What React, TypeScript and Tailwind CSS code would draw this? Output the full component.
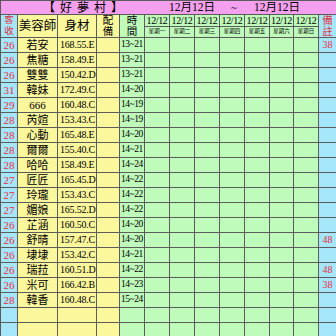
const ROWS = [
  { n: '26', name: '若安', body: '168.55.E', time: '13~21', note: '38' },
  { n: '26', name: '焦糖', body: '158.49.E', time: '13~21', note: '' },
  { n: '26', name: '雙雙', body: '150.42.D', time: '13~21', note: '' },
  { n: '31', name: '韓妹', body: '172.49.C', time: '14~20', note: '' },
  { n: '29', name: '666', body: '160.48.C', time: '14~19', note: '' },
  { n: '28', name: '芮媗', body: '153.43.C', time: '14~19', note: '' },
  { n: '28', name: '心動', body: '165.48.E', time: '14~20', note: '' },
  { n: '28', name: '爾爾', body: '155.40.C', time: '14~21', note: '' },
  { n: '28', name: '哈哈', body: '158.49.E', time: '14~24', note: '' },
  { n: '27', name: '匠匠', body: '165.45.D', time: '14~22', note: '' },
  { n: '27', name: '玲瓏', body: '153.43.C', time: '14~22', note: '' },
  { n: '27', name: '媚娘', body: '165.52.D', time: '14~22', note: '' },
  { n: '26', name: '芷涵', body: '160.50.C', time: '14~20', note: '' },
  { n: '26', name: '舒晴', body: '157.47.C', time: '14~20', note: '48' },
  { n: '26', name: '埭埭', body: '153.42.C', time: '14~21', note: '' },
  { n: '26', name: '瑞菈', body: '160.51.D', time: '14~22', note: '48' },
  { n: '26', name: '米可', body: '166.42.B', time: '14~23', note: '38' },
  { n: '28', name: '韓香', body: '160.48.C', time: '15~24', note: '' },
  { n: '', name: '', body: '', time: '', note: '' },
  { n: '', name: '', body: '', time: '', note: '' },
]

const DAYS = ['星期一', '星期二', '星期三', '星期四', '星期五', '星期六', '星期日']
const DAY_W = [25, 25, 25, 25, 25, 24, 25]

const cell = 'border border-[#5c5c5c] p-0 leading-none overflow-hidden whitespace-nowrap'

export default function App() {
  return (
    <div
      className="w-[336px] h-[336px] overflow-hidden bg-white text-black"
      style={{ fontFamily: '"Liberation Serif", "Noto Sans CJK TC", serif' }}
    >
      <table className="table-fixed border-collapse w-[336px]">
        <colgroup>
          <col className="w-[17px]" />
          <col className="w-[40px]" />
          <col className="w-[39px]" />
          <col className="w-[23px]" />
          <col className="w-[25px]" />
          {DAY_W.map((w, i) => (
            <col key={i} style={{ width: w }} />
          ))}
          <col className="w-[18px]" />
        </colgroup>
        <tbody>
          {/* title */}
          <tr className="h-[14px]">
            <td colSpan={13} className={`${cell} bg-[#f5a0ee]`}>
              <div className="flex items-center h-[13px] text-[12px]">
                <div className="w-[168px] flex pl-[42px] gap-[5px]">
                  <span>【</span><span>好</span><span>夢</span><span>村</span><span>】</span>
                </div>
                <span className="text-[11.5px]">12月12日</span>
                <span className="ml-[16px] text-[11px]">~</span>
                <span className="ml-[17px] text-[11.5px]">12月12日</span>
              </div>
            </td>
          </tr>
          {/* header */}
          <tr className="h-[12px]">
            <td rowSpan={2} className={`${cell} bg-[#a6e6fb] text-[#e0303e] text-[9.5px] text-center`}>
              <div className="leading-[11px]">客<br />收</div>
            </td>
            <td rowSpan={2} className={`${cell} bg-[#fbf79d] text-[12.5px] text-center`}>美容師</td>
            <td rowSpan={2} className={`${cell} bg-[#fbf79d] text-[12.5px] text-center`}>身材</td>
            <td rowSpan={2} className={`${cell} bg-[#fbf79d] text-[10.5px] text-center`}>
              <div className="leading-[11px]">配<br />備</div>
            </td>
            <td rowSpan={2} className={`${cell} bg-[#bffbbb] text-[10.5px] text-center`}>
              <div className="leading-[11px]">時<br />間</div>
            </td>
            {DAYS.map(d => (
              <td key={d} className={`${cell} bg-[#bffbbb] text-[10px] tracking-[-0.4px] text-center`}>12/12</td>
            ))}
            <td rowSpan={2} className={`${cell} bg-[#a6e6fb] text-[#e0303e] text-[10.5px] text-center`}>
              <div className="leading-[11px]">備<br />註</div>
            </td>
          </tr>
          <tr className="h-[11px]">
            {DAYS.map(d => (
              <td key={d} className={`${cell} bg-[#bffbbb] text-[5.5px] text-center`}>{d}</td>
            ))}
          </tr>
          {/* data */}
          {ROWS.map((r, i) => (
            <tr key={i} className="h-[15px]">
              <td className={`${cell} bg-[#a6e6fb] text-[#e0303e] text-[11px] text-center`}>{r.n}</td>
              <td className={`${cell} bg-[#fbf79d] text-[11px] text-center`}>{r.name}</td>
              <td className={`${cell} bg-[#fbf79d] text-[10px] tracking-[-0.2px] pl-[2px]`}>{r.body}</td>
              <td className={`${cell} bg-[#fbf79d]`}></td>
              <td className={`${cell} bg-[#bffbbb] text-[9.5px] tracking-[-0.5px] pl-[1px]`}>{r.time}</td>
              {DAYS.map(d => (
                <td key={d} className={`${cell} bg-[#bffbbb]`}></td>
              ))}
              <td className={`${cell} bg-[#a6e6fb] text-[#e0303e] text-[10px] text-center`}>{r.note}</td>
            </tr>
          ))}
        </tbody>
      </table>
    </div>
  )
}
